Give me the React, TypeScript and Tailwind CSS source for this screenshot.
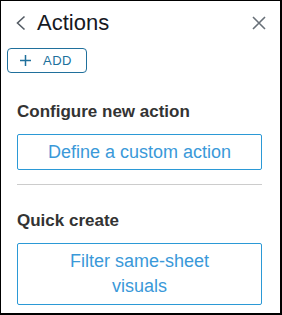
import React from "react";

export default function App() {
  return (
    <div
      className="w-[282px] h-[315px] bg-white border-black border-t-[1px] border-l-[1px] border-r-[2px] border-b-[2px] flex flex-col"
      style={{ fontFamily: '"Liberation Sans", Arial, sans-serif' }}
    >
      <div className="flex items-center h-[28px] mt-[8px] relative">
        <svg
          className="ml-[14px]"
          width="12"
          height="16"
          viewBox="0 0 12 16"
          fill="none"
          stroke="#545b64"
          strokeWidth="1.6"
        >
          <path d="M9.5 1.5 L2.5 8 L9.5 14.5" />
        </svg>
        <span className="ml-[10px] text-[22px] leading-[28px] text-[#16191f]">Actions</span>
        <svg
          className="ml-auto mr-[14px]"
          width="14"
          height="14"
          viewBox="0 0 14 14"
          fill="none"
          stroke="#687078"
          strokeWidth="1.6"
        >
          <path d="M1 1 L13 13 M13 1 L1 13" />
        </svg>
      </div>

      <div className="mt-[11px] ml-[6px]">
        <button className="w-[80px] h-[25px] border border-[#20709c] rounded-[4px] flex items-center pl-[12px] gap-[12px] text-[#20709c]">
          <svg width="11" height="11" viewBox="0 0 11 11" fill="none" stroke="#20709c" strokeWidth="1.5">
            <path d="M5.5 0 V11 M0 5.5 H11" />
          </svg>
          <span className="text-[13px] leading-[13px] tracking-[0.5px] font-medium">ADD</span>
        </button>
      </div>

      <div className="px-[16px] flex flex-col">
        <div className="mt-[29px] text-[17px] leading-[20px] font-bold text-[#333333]">
          Configure new action
        </div>
        <button className="mt-[12px] h-[36px] w-[245px] border border-[#2b99d6] rounded-[2px] text-[18px] leading-[20px] text-[#3a99d9] flex items-center justify-center">
          Define a custom action
        </button>
        <div className="mt-[14px] h-px w-[245px] bg-[#cccccc]" />
        <div className="mt-[26px] text-[17px] leading-[20px] font-bold text-[#333333]">
          Quick create
        </div>
        <button className="mt-[12px] h-[62px] w-[245px] border border-[#2b99d6] rounded-[2px] text-[18px] leading-[25px] text-[#3a99d9] flex items-center justify-center text-center px-[8px]">
          Filter same-sheet
          <br />
          visuals
        </button>
      </div>
    </div>
  );
}
